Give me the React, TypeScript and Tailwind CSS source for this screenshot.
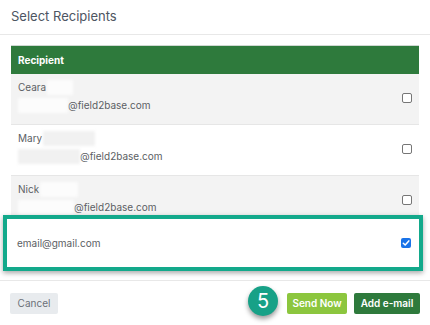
import React from "react";

type Recipient = {
  name: string;
  nameBlur: number;
  emailBlur: number;
  shaded: boolean;
};

const recipients: Recipient[] = [
  { name: "Ceara", nameBlur: 26, emailBlur: 50, shaded: true },
  { name: "Mary", nameBlur: 52, emailBlur: 62, shaded: false },
  { name: "Nick", nameBlur: 38, emailBlur: 56, shaded: true },
];

const Box = ({ checked }: { checked?: boolean }) =>
  checked ? (
    <span className="flex h-[10px] w-[10px] items-center justify-center rounded-[2px] bg-[#1a73e8]">
      <svg width="8" height="8" viewBox="0 0 8 8" fill="none">
        <path d="M1.3 4.2 3.2 6 6.8 1.9" stroke="white" strokeWidth="1.5" strokeLinecap="round" strokeLinejoin="round" />
      </svg>
    </span>
  ) : (
    <span className="block h-[10px] w-[10px] rounded-[2px] border border-[#767676] bg-white" />
  );

// blurred redaction patch over part of a name / address
const Redact = ({ w, shaded }: { w: number; shaded: boolean }) => (
  <span
    className={`inline-block h-[15px] align-middle blur-[1.5px] ${
      shaded ? "bg-white/75" : "bg-[#f1f1f1]"
    }`}
    style={{ width: w }}
  />
);

export default function App() {
  return (
    <div
      className="h-[325px] w-[430px] overflow-hidden bg-white text-[#5b5e63]"
      style={{ fontFamily: "Inter, 'Open Sans', sans-serif" }}
    >
      <div className="flex h-[35px] items-center border-b border-[#e8e8e8] pl-[11px] text-[13px] text-[#4d5562]">
        Select Recipients
      </div>

      <div className="mx-[11px] mt-[10px] border-t border-[#cfd8d2]">
        <div className="flex h-[28px] items-center bg-[#2e7a3c] pl-[7px] text-[10px] font-bold text-white">
          Recipient
        </div>
        {recipients.map((r) => (
          <div
            key={r.name}
            className={`flex h-[51px] items-start justify-between border-b border-[#e6e6e6] pl-[7px] pr-[7px] text-[10px] ${
              r.shaded ? "bg-[#f3f3f3]" : "bg-white"
            }`}
          >
            <div className="pt-[5px]">
              <div className="flex h-[16px] items-center gap-[1px]">
                {r.name}
                <Redact w={r.nameBlur} shaded={r.shaded} />
              </div>
              <div className="mt-[2px] flex h-[16px] items-center">
                <Redact w={r.emailBlur} shaded={r.shaded} />
                @field2base.com
              </div>
            </div>
            <div className="pt-[19px]">
              <Box />
            </div>
          </div>
        ))}
        <div className="relative z-10 -ml-[8px] -mr-[4px] -mt-[12px] flex h-[56px] items-center justify-between border-[4px] border-[#13a98b] bg-white pl-[10px] pr-[8px] text-[10px] shadow-[0_2px_5px_rgba(0,0,0,0.35)]">
          <span>email@gmail.com</span>
          <Box checked />
        </div>
      </div>

      <div className="mt-[9px] flex items-start justify-between border-t border-[#e8e8e8] px-[10px] pt-[12px] text-[10px]">
        <button className="flex h-[21px] w-[48px] items-center justify-center rounded-[2px] bg-[#e8ebee] text-[#6b7079]">
          Cancel
        </button>
        <div className="flex items-start">
          <span className="-mt-[7px] mr-[9px] flex h-[30px] w-[30px] items-center justify-center rounded-full bg-[#17a187] text-[20px] text-white shadow-[0_3px_5px_rgba(0,0,0,0.4)]">
            5
          </span>
          <button className="flex h-[21px] w-[60px] items-center justify-center rounded-[2px] bg-[#8cc63e] font-semibold text-white">
            Send Now
          </button>
          <button className="ml-[7px] flex h-[21px] w-[66px] items-center justify-center rounded-[2px] bg-[#2e7a3c] font-semibold text-white">
            Add e-mail
          </button>
        </div>
      </div>
    </div>
  );
}
